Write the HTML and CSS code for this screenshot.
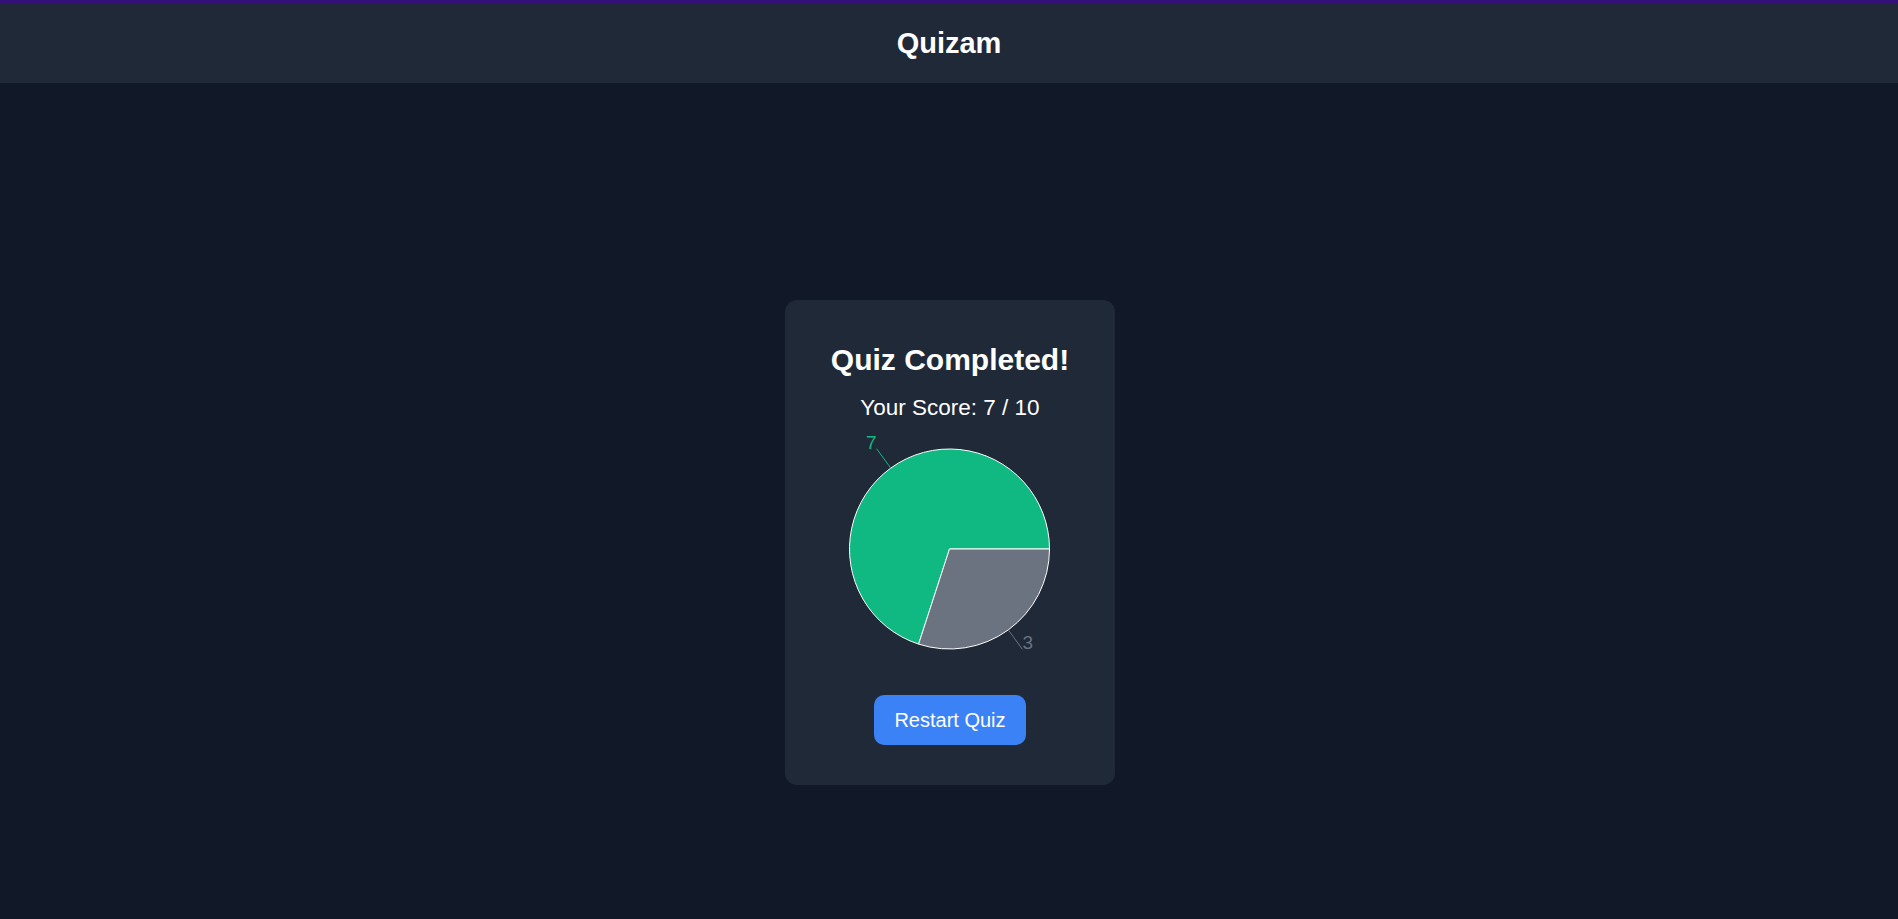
FILE: index.html
```html
<!DOCTYPE html>
<html lang="en">
<head>
<meta charset="utf-8">
<title>Quizam</title>
<link rel="stylesheet" href="styles.css">
</head>
<body>
<header class="topbar">
  <h1 class="brand">Quizam</h1>
</header>
<main class="main">
  <section class="card">
    <h2 class="card-title">Quiz Completed!</h2>
    <p class="score">Your Score: 7 / 10</p>
    <div class="chart">
      <svg class="pie" width="250" height="240" viewBox="0 0 250 240">
        <path d="M124.5,120 L224.5,120 A100,100 0 1 0 93.60,215.11 Z" fill="#10b981" stroke="#ffffff" stroke-width="1"/>
        <path d="M124.5,120 L93.60,215.11 A100,100 0 0 0 224.5,120 Z" fill="#6b7280" stroke="#ffffff" stroke-width="1"/>
        <line x1="65.72" y1="39.10" x2="51.61" y2="19.68" stroke="#10b981" stroke-width="1"/>
        <line x1="183.28" y1="200.90" x2="197.39" y2="220.32" stroke="#6b7280" stroke-width="1"/>
        <text class="pie-label" x="51.61" y="19.68" text-anchor="end" fill="#10b981">7</text>
        <text class="pie-label" x="197.39" y="220.32" text-anchor="start" fill="#6b7280">3</text>
      </svg>
    </div>
    <button class="restart">Restart Quiz</button>
  </section>
</main>
</body>
</html>
```
FILE: styles.css
```css
html, body {
  margin: 0;
  padding: 0;
}
body {
  background: #111827;
  color: #ffffff;
  font-family: "Liberation Sans", Arial, sans-serif;
  overflow: hidden;
}
.topbar {
  height: 80px;
  border-top: 3px solid #341078;
  background: #1f2937;
  display: flex;
  align-items: center;
  justify-content: center;
}
.brand {
  margin: 0;
  font-size: 29px;
  font-weight: 700;
  color: #ffffff;
  line-height: normal;
}
.main {
  min-height: 100vh;
  padding-left: 2px;
  display: flex;
  align-items: center;
  justify-content: center;
}
.card {
  width: 250px;
  padding: 40px;
  background: #1f2937;
  border-radius: 12px;
  display: flex;
  flex-direction: column;
  align-items: center;
}
.card-title {
  margin: 0;
  font-size: 30px;
  line-height: 40px;
  font-weight: 700;
  color: #ffffff;
  white-space: nowrap;
}
.score {
  margin: 13px 0 0;
  font-size: 22.5px;
  line-height: 30px;
  color: #ffffff;
  white-space: nowrap;
}
.chart {
  margin-top: 6px;
  width: 250px;
  height: 240px;
}
.pie {
  display: block;
  overflow: visible;
}
.pie-label {
  font-family: "Liberation Sans", Arial, sans-serif;
  font-size: 19px;
}
.restart {
  margin-top: 26px;
  height: 50px;
  padding: 0 20px;
  border: none;
  border-radius: 10px;
  background: #3b82f6;
  color: #ffffff;
  font-family: "Liberation Sans", Arial, sans-serif;
  font-size: 20px;
  line-height: 30px;
  cursor: pointer;
}
```
